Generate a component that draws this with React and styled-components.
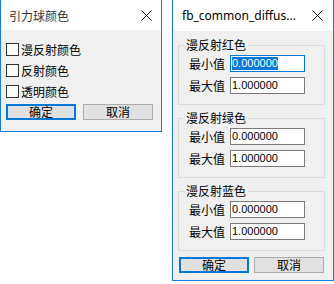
import React from "react";
import styled, { createGlobalStyle } from "styled-components";

const GlobalStyle = createGlobalStyle`
  html, body {
    margin: 0;
    padding: 0;
    background: #ffffff;
  }
  body {
    font-family: "Noto Sans CJK SC", "Noto Sans", sans-serif;
    font-size: 12px;
    color: #000;
  }
`;

const Screen = styled.div`
  display: flex;
  align-items: flex-start;
  gap: 10px;
  width: 334px;
  height: 284px;
  overflow: hidden;
`;

const Window = styled.div`
  display: flex;
  flex-direction: column;
  width: ${({ $width }) => $width}px;
  box-sizing: border-box;
  border: 1px solid #1a7fd4;
  border-top: none;
  background: #f0f0f0;
`;

const TitleBar = styled.div`
  display: flex;
  align-items: center;
  justify-content: space-between;
  height: ${({ $height }) => $height}px;
  background: #ffffff;
  padding: 0 ${({ $closeRight }) => $closeRight}px 0 ${({ $padLeft }) => $padLeft}px;
`;

const Title = styled.span`
  font-family: ${({ $latin }) =>
    $latin
      ? `"Noto Sans", "Liberation Sans", sans-serif`
      : `"Noto Sans CJK SC", sans-serif`};
  font-size: 12px;
  color: ${({ $latin }) => ($latin ? "#000" : "#333")};
  white-space: nowrap;
`;

const CloseIcon = () => (
  <svg width="11" height="11" viewBox="0 0 11 11">
    <path d="M0.5 0.5 L10.5 10.5 M10.5 0.5 L0.5 10.5" stroke="#111" strokeWidth="1" />
  </svg>
);

const Body = styled.div`
  display: flex;
  flex-direction: column;
  padding: ${({ $pad }) => $pad};
`;

const CheckRow = styled.label`
  display: flex;
  align-items: center;
  gap: 2px;
  height: 21px;
  font-size: 12px;
  line-height: 14px;
`;

const CheckBox = styled.span`
  width: 11px;
  height: 11px;
  border: 1px solid #333;
  background: #fff;
  flex-shrink: 0;
`;

const ButtonRow = styled.div`
  display: flex;
  gap: ${({ $gap }) => $gap}px;
  margin-top: ${({ $top }) => $top}px;
  padding-left: ${({ $left }) => $left}px;
`;

const Button = styled.div`
  display: flex;
  align-items: center;
  justify-content: center;
  width: 70px;
  height: 16px;
  box-sizing: border-box;
  background: #e1e1e1;
  border: ${({ $focused }) => ($focused ? "2px solid #0078d7" : "1px solid #adadad")};
  font-size: 12px;
  line-height: 14px;
`;

const Group = styled.fieldset`
  margin: 0 0 5px 0;
  width: 147px;
  box-sizing: border-box;
  border: 1px solid #dcdcdc;
  padding: 2px 0 10px 5px;
  display: flex;
  flex-direction: column;
  gap: 5px;
`;

const Legend = styled.legend`
  padding: 0 2px;
  font-size: 12px;
  line-height: 16px;
`;

const FieldRow = styled.div`
  display: flex;
  align-items: center;
  gap: 5px;
  padding-left: 5px;
`;

const FieldLabel = styled.span`
  font-size: 12px;
  line-height: 14px;
  width: 36px;
`;

const Input = styled.div`
  display: flex;
  align-items: center;
  width: 75px;
  height: 17px;
  box-sizing: border-box;
  border: 1px solid ${({ $focused }) => ($focused ? "#0078d7" : "#7a7a7a")};
  background: #fff;
  padding-left: 1px;
  font-family: "Liberation Sans", Arial, sans-serif;
  font-size: 11px;
`;

const Selected = styled.span`
  background: ${({ $on }) => ($on ? "#0078d7" : "transparent")};
  color: ${({ $on }) => ($on ? "#fff" : "#000")};
  line-height: 13px;
`;

const groups = [
  { name: "漫反射红色", min: "0.000000", max: "1.000000", focus: true },
  { name: "漫反射绿色", min: "0.000000", max: "1.000000" },
  { name: "漫反射蓝色", min: "0.000000", max: "1.000000" },
];

export default function App() {
  return (
    <>
      <GlobalStyle />
      <Screen>
        <Window $width={162}>
          <TitleBar $height={30} $padLeft={8} $closeRight={9}>
            <Title>引力球颜色</Title>
            <CloseIcon />
          </TitleBar>
          <Body $pad="9px 0 11px 5px">
            {["漫反射颜色", "反射颜色", "透明颜色"].map((t) => (
              <CheckRow key={t}>
                <CheckBox />
                {t}
              </CheckRow>
            ))}
            <ButtonRow $gap={7} $top={2} $left={0}>
              <Button $focused>确定</Button>
              <Button>取消</Button>
            </ButtonRow>
          </Body>
        </Window>

        <Window $width={162} style={{ height: 281 }}>
          <TitleBar $height={31} $padLeft={9} $closeRight={10}>
            <Title $latin>fb_common_diffus...</Title>
            <CloseIcon />
          </TitleBar>
          <Body $pad="6px 0 6px 5px">
            {groups.map((g) => (
              <Group key={g.name}>
                <Legend>{g.name}</Legend>
                <FieldRow>
                  <FieldLabel>最小值</FieldLabel>
                  <Input $focused={g.focus}>
                    <Selected $on={g.focus}>{g.min}</Selected>
                  </Input>
                </FieldRow>
                <FieldRow>
                  <FieldLabel>最大值</FieldLabel>
                  <Input>
                    <Selected>{g.max}</Selected>
                  </Input>
                </FieldRow>
              </Group>
            ))}
            <ButtonRow $gap={5} $top={1} $left={1}>
              <Button $focused>确定</Button>
              <Button>取消</Button>
            </ButtonRow>
          </Body>
        </Window>
      </Screen>
    </>
  );
}
